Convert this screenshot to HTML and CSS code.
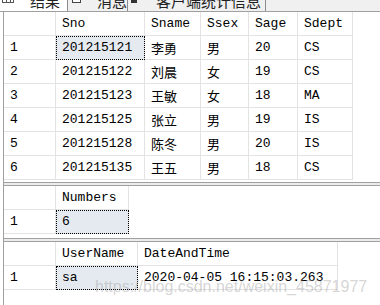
FILE: index.html
```html
<!DOCTYPE html>
<html lang="zh">
<head>
    <meta charset="UTF-8">
    <title>查询结果</title>
    <link rel="stylesheet" href="styles.css">
</head>
<body>
    <div class="tabs">
        <div class="tab active">
            <svg class="tab-icon" width="12" height="12" viewBox="0 0 12 12">
                <rect x="0.5" y="0.5" width="11" height="11" fill="#fff" stroke="#555"/>
                <line x1="0" y1="4.5" x2="12" y2="4.5" stroke="#555"/>
                <line x1="0" y1="8.5" x2="12" y2="8.5" stroke="#555"/>
                <line x1="4.5" y1="0" x2="4.5" y2="12" stroke="#555"/>
                <line x1="8.5" y1="0" x2="8.5" y2="12" stroke="#555"/>
            </svg>
            <span class="tab-label">结果</span>
        </div>
        <div class="tab">
            <svg class="tab-icon" width="12" height="12" viewBox="0 0 12 12">
                <rect x="0.5" y="0.5" width="8" height="11" fill="#fff" stroke="#444"/>
                <line x1="2" y1="4.5" x2="7" y2="4.5" stroke="#444"/>
                <line x1="2" y1="6.5" x2="7" y2="6.5" stroke="#444"/>
                <line x1="2" y1="8.5" x2="6" y2="8.5" stroke="#444"/>
                <rect x="9" y="5" width="3" height="3" fill="#333"/>
            </svg>
            <span class="tab-label">消息</span>
        </div>
        <div class="tab">
            <svg class="tab-icon" width="12" height="12" viewBox="0 0 12 12">
                <rect x="0" y="2" width="6" height="10" fill="#333"/>
                <line x1="7" y1="6.5" x2="12" y2="6.5" stroke="#444"/>
            </svg>
            <span class="tab-label">客户端统计信息</span>
        </div>
    </div>

    <div class="results">
        <div class="pane pane-main">
            <div class="grid students">
                <div class="cell"></div>
                <div class="cell">Sno</div>
                <div class="cell">Sname</div>
                <div class="cell">Ssex</div>
                <div class="cell">Sage</div>
                <div class="cell">Sdept</div>

                <div class="cell">1</div>
                <div class="cell selected">201215121</div>
                <div class="cell">李勇</div>
                <div class="cell">男</div>
                <div class="cell">20</div>
                <div class="cell">CS</div>

                <div class="cell">2</div>
                <div class="cell">201215122</div>
                <div class="cell">刘晨</div>
                <div class="cell">女</div>
                <div class="cell">19</div>
                <div class="cell">CS</div>

                <div class="cell">3</div>
                <div class="cell">201215123</div>
                <div class="cell">王敏</div>
                <div class="cell">女</div>
                <div class="cell">18</div>
                <div class="cell">MA</div>

                <div class="cell">4</div>
                <div class="cell">201215125</div>
                <div class="cell">张立</div>
                <div class="cell">男</div>
                <div class="cell">19</div>
                <div class="cell">IS</div>

                <div class="cell">5</div>
                <div class="cell">201215128</div>
                <div class="cell">陈冬</div>
                <div class="cell">男</div>
                <div class="cell">20</div>
                <div class="cell">IS</div>

                <div class="cell">6</div>
                <div class="cell">201215135</div>
                <div class="cell">王五</div>
                <div class="cell">男</div>
                <div class="cell">18</div>
                <div class="cell">CS</div>
            </div>
        </div>

        <div class="splitter"></div>

        <div class="pane pane-count">
            <div class="grid numbers">
                <div class="cell"></div>
                <div class="cell">Numbers</div>
                <div class="cell">1</div>
                <div class="cell selected">6</div>
            </div>
        </div>

        <div class="splitter"></div>

        <div class="pane pane-user">
            <div class="grid login">
                <div class="cell"></div>
                <div class="cell">UserName</div>
                <div class="cell">DateAndTime</div>
                <div class="cell">1</div>
                <div class="cell selected">sa</div>
                <div class="cell">2020-04-05 16:15:03.263</div>
            </div>
        </div>
    </div>

    <div class="watermark">https://blog.csdn.net/weixin_45871977</div>
</body>
</html>
```

FILE: styles.css
```css
body {
    margin: 0;
    width: 380px;
    height: 305px;
    overflow: hidden;
    background-color: white;
    display: flex;
    flex-direction: column;
    position: relative;
    font-family: 'Liberation Mono', 'Noto Sans CJK SC', monospace;
    font-size: 13px;
    color: #000;
}

/* tab strip, top half is cut off in the shot */
.tabs {
    display: flex;
    height: 11px;
    background-color: #f0f0f0;
    border-bottom: 1px solid #a0a0a0;
    font-family: 'Noto Sans CJK SC', sans-serif;
}

.tab {
    display: flex;
    align-items: flex-start;
    height: 11px;
    overflow: hidden;
    border-right: 1px solid #8c8c8c;
    box-sizing: content-box;
}

.tab:nth-child(1) {
    width: 67px;
    padding-left: 2px;
    box-sizing: border-box;
    width: 68px;
    background-color: white;
}

.tab:nth-child(2) {
    width: 60px;
    padding-left: 4px;
    box-sizing: border-box;
}

.tab:nth-child(3) {
    width: 138px;
    padding-left: 3px;
    box-sizing: border-box;
}

.tab-icon {
    flex-shrink: 0;
    margin-top: -9px;
}

.tab-label {
    margin-top: -8px;
    font-size: 15px;
    line-height: 18px;
    white-space: nowrap;
    color: #222;
}

.tab:nth-child(1) .tab-label {
    margin-left: 16px;
}

.tab:nth-child(2) .tab-label {
    margin-left: 13px;
}

.tab:nth-child(3) .tab-label {
    margin-left: 13px;
}

.results {
    flex: 1;
    display: flex;
    flex-direction: column;
    margin-left: 3px;
    border-left: 1px solid #a0a0a0;
}

.pane {
    background-color: white;
    overflow: hidden;
}

.pane-main {
    height: 170px;
}

.pane-count {
    height: 52px;
}

.pane-user {
    flex: 1;
}

.splitter {
    height: 2px;
    background-color: #ececec;
    border-top: 1px solid #a0a0a0;
    border-bottom: 1px solid #a0a0a0;
}

.grid {
    display: grid;
    grid-auto-rows: 24px;
    width: max-content;
}

.students {
    grid-template-columns: 52px 89px 56px 48px 49px 55px;
}

.numbers {
    grid-template-columns: 52px 73px;
}

.login {
    grid-template-columns: 52px 82px 200px;
}

.cell {
    display: flex;
    align-items: center;
    padding: 0 6px;
    box-sizing: border-box;
    border-right: 1px solid #e3e3e3;
    border-bottom: 1px solid #e3e3e3;
    white-space: nowrap;
    overflow: hidden;
}

.selected {
    background-color: #e5eaf0;
    outline: 1px dotted #000;
    outline-offset: -1px;
}

.watermark {
    position: absolute;
    left: 95px;
    top: 279px;
    font-family: 'Liberation Sans', sans-serif;
    font-size: 16px;
    line-height: 16px;
    color: rgba(150, 150, 150, 0.4);
    white-space: nowrap;
    pointer-events: none;
}
```
